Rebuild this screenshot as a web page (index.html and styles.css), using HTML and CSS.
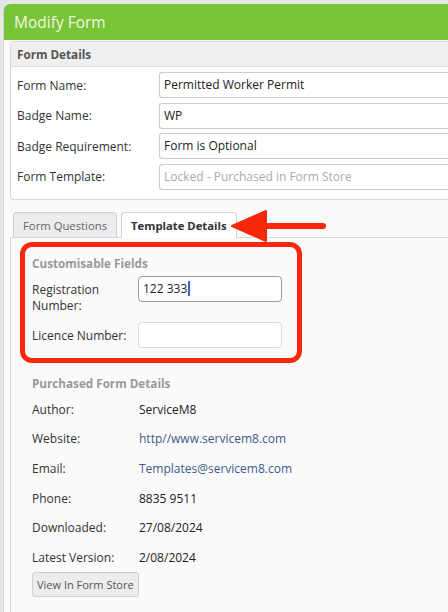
FILE: index.html
```html
<!DOCTYPE html>
<html>
<head>
<meta charset="utf-8">
<link rel="stylesheet" href="styles.css">
</head>
<body>
<div class="modal">
  <div class="modal-header">Modify Form</div>
  <div class="modal-body">
    <div class="panel">
      <div class="panel-heading">Form Details</div>
      <div class="panel-body">
        <div class="row"><span class="label">Form Name:</span><div class="input">Permitted Worker Permit</div></div>
        <div class="row"><span class="label">Badge Name:</span><div class="input">WP</div></div>
        <div class="row"><span class="label">Badge Requirement:</span><div class="input">Form is Optional</div></div>
        <div class="row"><span class="label">Form Template:</span><div class="input disabled">Locked - Purchased in Form Store</div></div>
      </div>
    </div>
    <div class="tabs">
      <div class="tab">Form Questions</div>
      <div class="tab active">Template Details</div>
      <svg class="arrow" width="100" height="40" viewBox="0 0 100 40">
        <line x1="30" y1="20" x2="93" y2="20" stroke="#f8280c" stroke-width="6" stroke-linecap="round"/>
        <polygon points="2,20 36,5 36,35" fill="#f8280c" stroke="#f8280c" stroke-width="2" stroke-linejoin="round"/>
      </svg>
    </div>
    <div class="tab-content">
      <div class="highlight"></div>
      <div class="section-title">Customisable Fields</div>
      <div class="field-row"><span class="field-label">Registration<br>Number:</span><div class="field-input focused">122 333<span class="caret"></span></div></div>
      <div class="field-row"><span class="field-label">Licence Number:</span><div class="field-input"></div></div>
      <div class="section-title purchased">Purchased Form Details</div>
      <div class="details">
        <div class="detail"><span class="dlabel">Author:</span><span class="dvalue">ServiceM8</span></div>
        <div class="detail"><span class="dlabel">Website:</span><span class="dvalue link">http//www.servicem8.com</span></div>
        <div class="detail"><span class="dlabel">Email:</span><span class="dvalue link">Templates@servicem8.com</span></div>
        <div class="detail"><span class="dlabel">Phone:</span><span class="dvalue">8835 9511</span></div>
        <div class="detail"><span class="dlabel">Downloaded:</span><span class="dvalue">27/08/2024</span></div>
        <div class="detail"><span class="dlabel">Latest Version:</span><span class="dvalue">2/08/2024</span></div>
      </div>
      <div class="btn">View In Form Store</div>
    </div>
  </div>
</div>
</body>
</html>
```
FILE: styles.css
```css
html, body {
  margin: 0;
  padding: 0;
  height: 100%;
  overflow: hidden;
}
body {
  background: #e6e6e6;
  font-family: "Open Sans", "DejaVu Sans", sans-serif;
  font-size: 12px;
  color: #333;
}
.modal {
  margin: 4px 0 0 3px;
  width: 490px;
  height: 620px;
  background: #fafafa;
  border-left: 1px solid #d2d2d2;
  border-top-left-radius: 6px;
}
.modal-header {
  height: 36px;
  line-height: 36px;
  background: #78c336;
  color: #eef8e6;
  font-size: 15.5px;
  padding-left: 10px;
  border-top-left-radius: 6px;
}
.modal-body {
  padding: 1px 0 0 6px;
}
.panel {
  background: #fff;
  border: 1px solid #d8d8d8;
  border-right: none;
  border-radius: 4px 0 0 4px;
}
.panel-heading {
  height: 24px;
  line-height: 24px;
  background: #efefef;
  border-bottom: 1px solid #dcdcdc;
  padding-left: 6px;
  font-weight: bold;
  font-size: 11.7px;
  color: #555;
}
.panel-body {
  padding: 5px 0 9px 6px;
  display: flex;
  flex-direction: column;
  gap: 4.5px;
}
.row {
  display: grid;
  grid-template-columns: 142px 1fr;
  align-items: center;
}
.label {
  color: #333;
}
.input {
  height: 26px;
  box-sizing: border-box;
  border: 1px solid #ccc;
  border-right: none;
  border-radius: 3px 0 0 3px;
  background: #fff;
  line-height: 24px;
  padding-left: 4px;
  color: #222;
}
.input.disabled {
  color: #aaa;
}
.tabs {
  position: relative;
  display: flex;
  gap: 4px;
  margin-top: 12px;
  padding-left: 3px;
  height: 25px;
  align-items: flex-end;
}
.tab {
  height: 25px;
  box-sizing: border-box;
  border: 1px solid #d0d0d0;
  border-bottom: none;
  border-radius: 4px 4px 0 0;
  background: #ececec;
  color: #666;
  padding: 0 9px;
  line-height: 25px;
  font-size: 11.3px;
}
.tab.active {
  background: #fff;
  color: #333;
  font-weight: bold;
  height: 26px;
  margin-bottom: -1px;
  position: relative;
  z-index: 1;
}
.arrow {
  position: absolute;
  left: 220px;
  top: -6px;
  z-index: 2;
}
.tab-content {
  position: relative;
  border-top: 1px solid #d8d8d8;
  border-left: 1px solid #d8d8d8;
  background: #fafafa;
  padding: 16px 0 0 21px;
  height: 400px;
}
.highlight {
  position: absolute;
  left: 9px;
  top: 4px;
  width: 282px;
  height: 121px;
  box-sizing: border-box;
  border: 5px solid #f8280c;
  border-radius: 12px;
}
.section-title {
  font-weight: bold;
  font-size: 11.7px;
  color: #999;
  line-height: 18px;
  margin-bottom: 4px;
}
.section-title.purchased {
  margin-top: 26px;
  margin-bottom: 3px;
}
.field-row {
  display: grid;
  grid-template-columns: 106px 144px;
  align-items: start;
  margin-bottom: 8px;
}
.field-label {
  padding-top: 6px;
  line-height: 16px;
  color: #333;
}
.field-input {
  height: 26px;
  box-sizing: border-box;
  border: 1px solid #dadada;
  border-radius: 4px;
  background: #fff;
  line-height: 24px;
  padding-left: 4px;
  color: #222;
}
.field-input.focused {
  border-color: #9a9a9a;
}
.caret {
  display: inline-block;
  width: 2px;
  height: 15px;
  background: #2a6bd4;
  vertical-align: -3px;
  margin-left: 1px;
}
.details {
  display: flex;
  flex-direction: column;
}
.detail {
  display: grid;
  grid-template-columns: 107px 1fr;
  height: 29.6px;
  align-items: center;
}
.dlabel {
  color: #333;
}
.dvalue {
  color: #222;
}
.dvalue.link {
  color: #3d5a8a;
}
.btn {
  display: inline-block;
  height: 25px;
  box-sizing: border-box;
  border: 1px solid #cfcfcf;
  border-radius: 3px;
  background: #ececec;
  color: #555;
  padding: 0 4px;
  line-height: 23px;
  font-size: 11px;
}
```
